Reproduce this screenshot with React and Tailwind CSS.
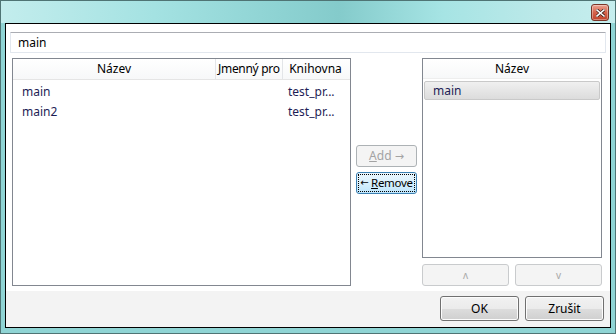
import React from 'react';

const font = { fontFamily: '"Segoe UI", "Noto Sans", "Open Sans", sans-serif' };

function ListHeaderCell({ children, className = '' }) {
  return (
    <div className={`h-full flex items-center justify-center overflow-hidden whitespace-nowrap border-r border-[#e3e5e8] ${className}`}>
      {children}
    </div>
  );
}

function CloseButton() {
  return (
    <button
      type="button"
      className="w-[18px] h-[17px] rounded-[3px] border border-[#7a3528] bg-gradient-to-b from-[#eba392] via-[#d5634b] to-[#c0432a] flex items-center justify-center shadow-[inset_0_0_0_1px_rgba(255,255,255,0.35)]"
    >
      <svg width="9" height="8" viewBox="0 0 9 8">
        <path d="M1 1 L8 7 M8 1 L1 7" stroke="#3a1a14" strokeWidth="3" strokeLinecap="square" />
        <path d="M1 1 L8 7 M8 1 L1 7" stroke="#ffffff" strokeWidth="1.6" strokeLinecap="square" />
      </svg>
    </button>
  );
}

export default function App() {
  const rows = [
    { name: 'main', lib: 'test_pr...' },
    { name: 'main2', lib: 'test_pr...' },
  ];

  return (
    <div
      className="w-[616px] h-[334px] border border-[#4f7474] bg-[#8fd4d4] flex flex-col px-[4px] pb-[5px] text-[12px] text-black"
      style={font}
    >
      {/* title bar */}
      <div className="h-[22px] -mx-[4px] px-[6px] pt-[3px] flex justify-end items-start bg-[linear-gradient(90deg,#c3eded_0%,#a4e2e2_25%,#8ed3d3_45%,#84cbcb_55%,#a6e4e4_72%,#bce9e9_88%,#c6eeee_100%)]">
        <CloseButton />
      </div>

      {/* client area */}
      <div className="flex-1 border border-black bg-white flex flex-col">
        <div className="px-[4px] pt-[8px]">
          <div className="h-[21px] border border-[#e2e7ee] border-t-[#abadb3] rounded-[1px] flex items-center pl-[7px]">
            main
          </div>
        </div>

        <div className="flex pl-[6px] pr-[6px] pt-[5px]">
          {/* left list */}
          <div className="w-[339px] h-[228px] border border-[#828790] flex flex-col">
            <div className="h-[21px] flex border-b border-[#e5e5e5] bg-gradient-to-b from-white to-[#f7f8f9]">
              <ListHeaderCell className="w-[203px]">Název</ListHeaderCell>
              <ListHeaderCell className="w-[67px] !justify-start pl-[2px] tracking-[-0.3px]">Jmenný pro</ListHeaderCell>
              <ListHeaderCell className="w-[65px] border-r-0">Knihovna</ListHeaderCell>
            </div>
            <div className="pt-[2px]">
              {rows.map((r) => (
                <div key={r.name} className="h-[20px] flex items-center text-[#1d1d55]">
                  <div className="w-[203px] pl-[9px]">{r.name}</div>
                  <div className="w-[67px]" />
                  <div className="w-[65px] pl-[5px]">{r.lib}</div>
                </div>
              ))}
            </div>
          </div>

          {/* middle buttons */}
          <div className="w-[71px] flex flex-col items-center justify-center gap-[5px] pb-[5px]">
            <button
              type="button"
              className="w-[61px] h-[22px] rounded-[3px] border border-[#adb2b5] bg-[#f4f4f4] text-[#a3a3a3] flex items-center justify-center"
            >
              <span>
                <span className="underline">A</span>dd <span className="font-['DejaVu_Sans'] text-[11px]">→</span>
              </span>
            </button>
            <button
              type="button"
              className="w-[61px] h-[22px] rounded-[3px] border border-[#3c7fb1] bg-gradient-to-b from-[#eaf6fd] via-[#d9f0fc] to-[#bee6fd] flex items-center justify-center p-[1px]"
            >
              <span className="w-full h-full border border-dotted border-black flex items-center justify-center leading-none whitespace-nowrap text-[11.5px] tracking-[-0.3px]">
                <span className="font-['DejaVu_Sans'] text-[10px]">←</span>&nbsp;<span className="underline">R</span>emove
              </span>
            </button>
          </div>

          {/* right column */}
          <div className="w-[180px] flex flex-col">
            <div className="h-[200px] border border-[#828790] flex flex-col">
              <div className="h-[20px] flex items-center justify-center bg-gradient-to-b from-white to-[#f7f8f9] border-b border-[#eeeeee]">
                Název
              </div>
              <div className="px-[1px] pt-[2px]">
                <div className="h-[19px] rounded-[2px] border border-[#c9c9c9] bg-gradient-to-b from-[#f0f0f0] to-[#dcdcdc] flex items-center pl-[8px] text-[#1d1d55]">
                  main
                </div>
              </div>
            </div>
            <div className="flex gap-[6px] mt-[6px]">
              <button
                type="button"
                className="flex-1 h-[22px] rounded-[3px] border border-[#c9cbcd] bg-[#f4f4f4] text-[#a8a8a8] text-[10px] flex items-center justify-center"
              >
                ʌ
              </button>
              <button
                type="button"
                className="flex-1 h-[22px] rounded-[3px] border border-[#c9cbcd] bg-[#f4f4f4] text-[#a8a8a8] text-[10px] flex items-center justify-center"
              >
                v
              </button>
            </div>
          </div>
        </div>

        {/* footer */}
        <div className="flex-1 mt-[5px] bg-[#f3f3f3] flex justify-end items-start gap-[6px] pt-[5px] pr-[6px]">
          <button
            type="button"
            className="w-[79px] h-[25px] rounded-[3px] border border-[#707070] bg-[linear-gradient(180deg,#f2f2f2_0%,#ebebeb_50%,#dddddd_51%,#cfcfcf_100%)] shadow-[inset_0_0_0_1px_#fcfcfc] flex items-center justify-center"
          >
            OK
          </button>
          <button
            type="button"
            className="w-[79px] h-[25px] rounded-[3px] border border-[#707070] bg-[linear-gradient(180deg,#f2f2f2_0%,#ebebeb_50%,#dddddd_51%,#cfcfcf_100%)] shadow-[inset_0_0_0_1px_#fcfcfc] flex items-center justify-center"
          >
            Zrušit
          </button>
        </div>
      </div>
    </div>
  );
}
